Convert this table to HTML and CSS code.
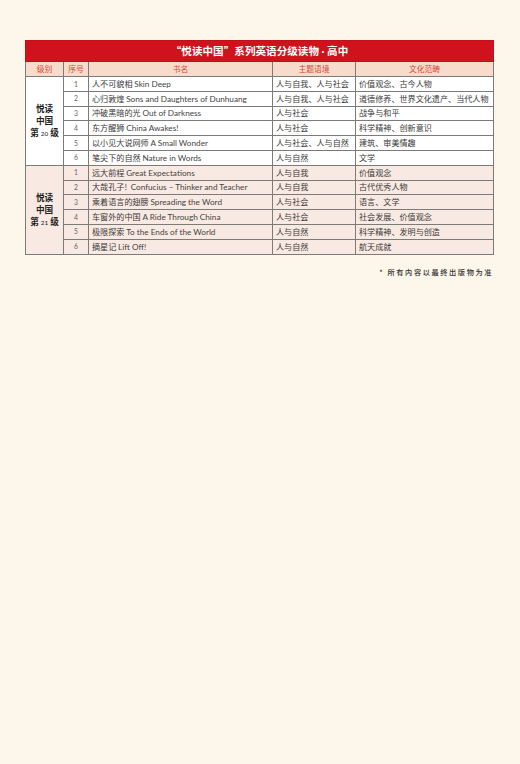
FILE: index.html
```html
<!DOCTYPE html>
<html lang="zh">
<head>
<meta charset="utf-8">
<title>悦读中国 系列英语分级读物 · 高中</title>
<link rel="stylesheet" href="styles.css">
</head>
<body>
<div class="page">
  <table class="books">
    <colgroup>
      <col class="c-level"><col class="c-no"><col class="c-title"><col class="c-theme"><col class="c-culture">
    </colgroup>
    <thead>
      <tr class="title-row"><th colspan="5">“悦读中国”系列英语分级读物<span class="dot"> · </span>高中</th></tr>
      <tr class="head-row"><th>级别</th><th>序号</th><th>书名</th><th>主题语境</th><th>文化范畴</th></tr>
    </thead>
    <tbody class="g1">
      <tr><td class="level" rowspan="6"><b>悦读</b><b>中国</b><b>第 <span class="num">20</span> 级</b></td><td class="no">1</td><td>人不可貌相 <span class="en">Skin Deep</span></td><td>人与自我、人与社会</td><td>价值观念、古今人物</td></tr>
      <tr><td class="no">2</td><td>心归敦煌 <span class="en">Sons and Daughters of Dunhuang</span></td><td>人与自我、人与社会</td><td>道德修养、世界文化遗产、当代人物</td></tr>
      <tr><td class="no">3</td><td>冲破黑暗的光 <span class="en">Out of Darkness</span></td><td>人与社会</td><td>战争与和平</td></tr>
      <tr><td class="no">4</td><td>东方醒狮 <span class="en">China Awakes!</span></td><td>人与社会</td><td>科学精神、创新意识</td></tr>
      <tr><td class="no">5</td><td>以小见大说网师 <span class="en">A Small Wonder</span></td><td>人与社会、人与自然</td><td>建筑、审美情趣</td></tr>
      <tr><td class="no">6</td><td>笔尖下的自然 <span class="en">Nature in Words</span></td><td>人与自然</td><td>文学</td></tr>
    </tbody>
    <tbody class="g2">
      <tr><td class="level" rowspan="6"><b>悦读</b><b>中国</b><b>第 <span class="num">21</span> 级</b></td><td class="no">1</td><td>远大前程 <span class="en">Great Expectations</span></td><td>人与自我</td><td>价值观念</td></tr>
      <tr><td class="no">2</td><td>大哉孔子! &nbsp;<span class="en">Confucius – Thinker and Teacher</span></td><td>人与自我</td><td>古代优秀人物</td></tr>
      <tr><td class="no">3</td><td>乘着语言的翅膀 <span class="en">Spreading the Word</span></td><td>人与社会</td><td>语言、文学</td></tr>
      <tr><td class="no">4</td><td>车窗外的中国 <span class="en">A Ride Through China</span></td><td>人与社会</td><td>社会发展、价值观念</td></tr>
      <tr><td class="no">5</td><td>极限探索 <span class="en">To the Ends of the World</span></td><td>人与自然</td><td>科学精神、发明与创造</td></tr>
      <tr><td class="no">6</td><td>摘星记 <span class="en">Lift Off!</span></td><td>人与自然</td><td>航天成就</td></tr>
    </tbody>
  </table>
  <p class="note">* 所有内容以最终出版物为准</p>
</div>
</body>
</html>
```

FILE: styles.css
```css
html, body {
  margin: 0;
  padding: 0;
  background: #fdf6ea;
}
body {
  width: 520px;
  height: 764px;
  font-family: "Noto Sans CJK SC", "Noto Sans", sans-serif;
  color: #3a3a3a;
}
.page {
  padding: 40px 27px 0 25px;
}
.books {
  width: 468px;
  border-collapse: collapse;
  table-layout: fixed;
  font-size: 8.1px;
  line-height: 1;
}
.c-level { width: 38px; }
.c-no { width: 25px; }
.c-title { width: 184px; }
.c-theme { width: 83px; }
.c-culture { width: 138px; }

.books th, .books td {
  border: 1px solid #7d7b78;
  padding: 0 0 0 3px;
  white-space: nowrap;
  overflow: hidden;
  font-weight: 400;
}
.title-row th {
  background: #d0121d;
  color: #fff;
  height: 20px;
  font-size: 10.6px;
  font-weight: 700;
  text-align: center;
  padding: 0;
  border-color: #c01019;
}
.title-row .dot {
  font-family: "Lato", sans-serif;
  font-weight: 700;
}
.head-row th {
  background: #f8dccb;
  color: #d5473b;
  height: 14px;
  font-size: 7.8px;
  text-align: center;
  padding: 0;
}
.books tbody tr { height: 14.8px; }
.g1 td { background: #ffffff; }
.g2 td { background: #f8e9e2; }
.books td.no {
  text-align: center;
  padding: 0;
  color: #666;
  font-size: 6.8px;
  font-family: "Lato", "Noto Sans", sans-serif;
}
.en {
  font-family: "Lato", "Noto Sans", sans-serif;
  font-weight: 400;
  font-size: 8.2px;
  color: #444;
}
.books td.level {
  text-align: center;
  padding: 0;
  vertical-align: middle;
  white-space: normal;
}
.level b {
  display: block;
  font-weight: 700;
  font-size: 8.6px;
  line-height: 12px;
  color: #222;
}
.level .num {
  font-weight: 400;
  font-size: 6.4px;
  font-family: "Lato", sans-serif;
}
.note {
  margin: 12px 0 0 0;
  text-align: right;
  font-size: 7.2px;
  font-weight: 500;
  letter-spacing: 1.6px;
  color: #333;
  font-family: "Noto Sans CJK SC", serif;
}
```
